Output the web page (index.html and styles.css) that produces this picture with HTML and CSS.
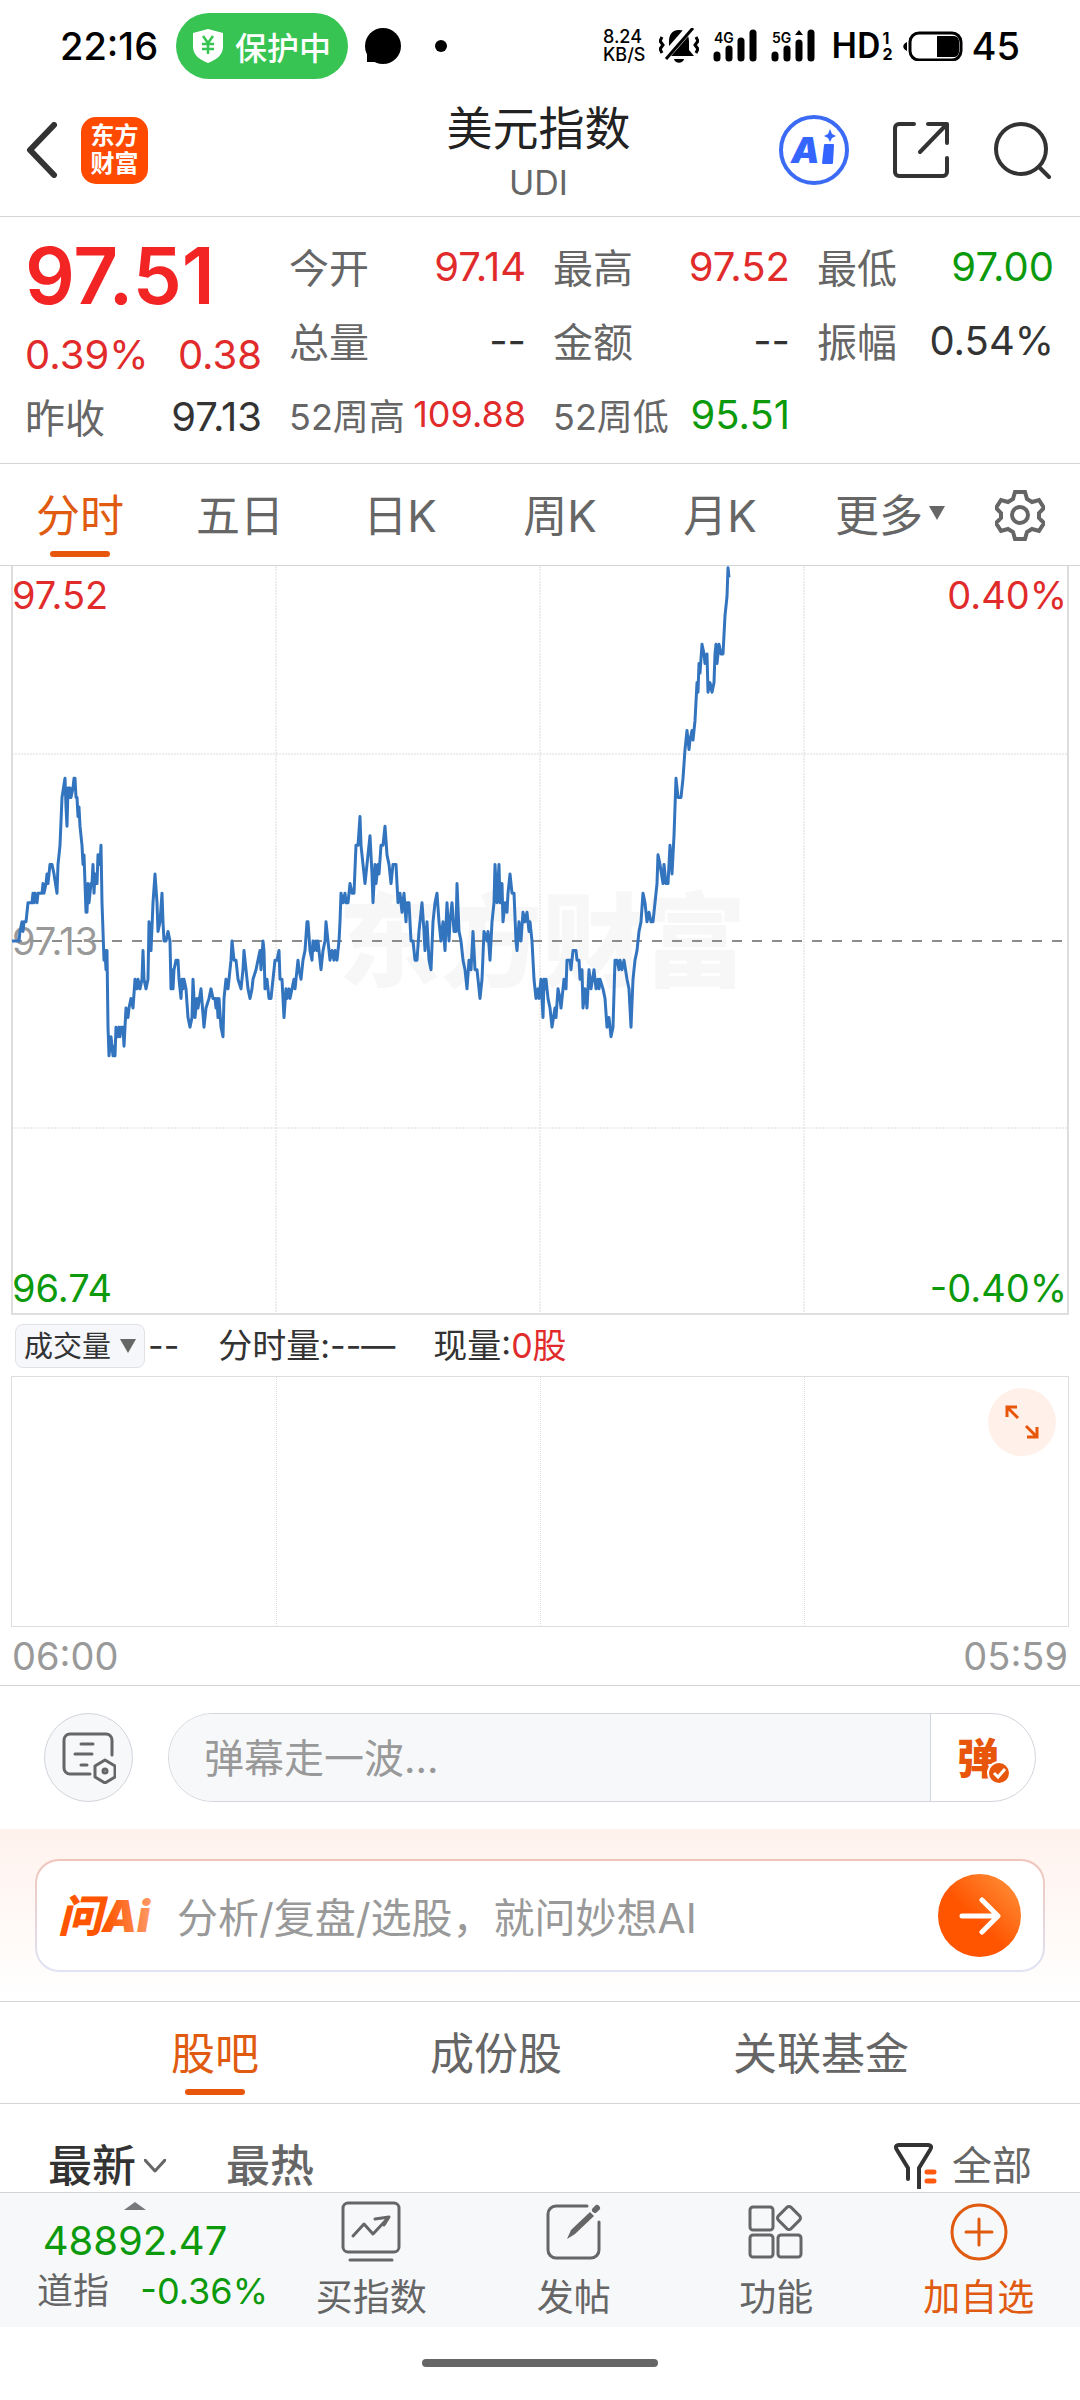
FILE: index.html
```html
<!DOCTYPE html>
<html lang="zh-CN">
<head>
    <meta charset="UTF-8">
    <meta name="viewport" content="width=device-width, initial-scale=1.0">
    <title>美元指数 UDI</title>
    <link rel="stylesheet" href="styles.css">
</head>
<body>
    <div class="status-bar">
        <span class="clock">22:16</span>
        <span class="guard">
            <svg width="30" height="34" viewBox="0 0 30 34">
                <path d="M15 0 30 4v14c0 8-7 13-15 16C7 31 0 26 0 18V4z" fill="#fff"/>
                <path d="M10 7l5 7 5-7M15 14v11M9 15h12M9 20h12" fill="none" stroke="#37c452" stroke-width="2.5"/>
            </svg>
            保护中
        </span>
        <svg class="chat-dot" width="36" height="38" viewBox="0 0 36 38">
            <circle cx="18" cy="19" r="18"/>
            <path d="M2 22v13h14z"/>
        </svg>
        <span class="more-dot"></span>
        <div class="status-right">
            <span class="speed">8.24<br>KB/S</span>
            <svg width="40" height="36" viewBox="0 0 40 36">
                <path d="M20 2c-8 0-10 6-10 12v8l-5 6h30l-5-6v-8c0-6-2-12-10-12z"/>
                <path d="M15 31h10c-1 5-9 5-10 0z"/>
                <path d="M5 30 32-1" stroke="#fff" stroke-width="8"/>
                <path d="M7 31 34 0" stroke="#000" stroke-width="3"/>
                <path d="M3 9l-2 4 3 4-3 4 2 4M37 9l2 4-3 4 3 4-2 4" fill="none" stroke="#000" stroke-width="3"/>
            </svg>
            <svg class="signal" width="44" height="34" viewBox="0 0 44 34">
                <path d="M4 26v3M16 20v9M28 12v17M40 4v25" stroke="#000" stroke-width="7" stroke-linecap="round"/>
                <text x="1" y="14" font-size="14">4G</text>
            </svg>
            <svg class="signal" width="44" height="34" viewBox="0 0 44 34">
                <path d="M4 26v3M16 20v9M28 14v15M40 4v25" stroke="#000" stroke-width="7" stroke-linecap="round"/>
                <path d="M24 6l4-5 4 5z"/>
                <text x="1" y="14" font-size="14">5G</text>
            </svg>
            <span class="hd">HD</span>
            <span class="hd-sim">1<br>2</span>
            <svg class="battery" width="60" height="30" viewBox="0 0 60 30">
                <rect x="7" y="2" width="51" height="27" rx="9" fill="none" stroke="#000" stroke-width="3"/>
                <path d="M34 5h16c4 0 6 2 6 6v9c0 4-2 6-6 6H34zM4 11v9c-5-2-5-7 0-9z"/>
            </svg>
            <span class="clock">45</span>
        </div>
    </div>

    <header class="header">
        <div class="header-side">
            <button class="icon-btn" aria-label="返回">
                <svg width="32" height="56" viewBox="0 0 32 56" class="line dark thick">
                    <path d="M28 3 4 28l24 25"/>
                </svg>
            </button>
            <span class="logo">东方<br>财富</span>
        </div>
        <div class="title">
            <h1>美元指数</h1>
            <p>UDI</p>
        </div>
        <div class="header-side right">
            <button class="icon-btn" aria-label="Ai">
                <svg width="70" height="70" viewBox="0 0 70 70">
                    <circle cx="35" cy="35" r="33" fill="none" stroke="#3b6bf5" stroke-width="4"/>
                    <text x="12" y="48" class="ai-letter">A</text>
                    <path d="M46 30h8l-1 18h-9z" fill="#3565ff" stroke="#3565ff" stroke-width="2" stroke-linejoin="round"/>
                    <path d="M51 14l2 5 4 2-4 2-2 4-2-4-4-2 4-2z" fill="#3565ff"/>
                </svg>
            </button>
            <button class="icon-btn" aria-label="分享">
                <svg width="58" height="58" viewBox="0 0 58 58" class="line dark">
                    <path d="M22 3H7a4 4 0 0 0-4 4v44a4 4 0 0 0 4 4h44a4 4 0 0 0 4-4V37M36 3h19v19M55 3 28 31"/>
                </svg>
            </button>
            <button class="icon-btn" aria-label="搜索">
                <svg width="58" height="58" viewBox="0 0 58 58" class="line dark">
                    <circle cx="28" cy="28" r="25"/>
                    <path d="M46 46l10 10"/>
                </svg>
            </button>
        </div>
    </header>

    <section class="quote">
        <div class="quote-main">
            <strong class="price">97.51</strong>
            <div class="pair up"><span>0.39%</span><span>0.38</span></div>
            <div class="pair"><span class="name">昨收</span><span>97.13</span></div>
        </div>
        <dl class="quote-col">
            <div class="pair"><dt>今开</dt><dd class="up">97.14</dd></div>
            <div class="pair"><dt>总量</dt><dd>--</dd></div>
            <div class="pair small"><dt>52周高</dt><dd class="up">109.88</dd></div>
        </dl>
        <dl class="quote-col">
            <div class="pair"><dt>最高</dt><dd class="up">97.52</dd></div>
            <div class="pair"><dt>金额</dt><dd>--</dd></div>
            <div class="pair week"><dt>52周低</dt><dd class="down">95.51</dd></div>
        </dl>
        <dl class="quote-col">
            <div class="pair"><dt>最低</dt><dd class="down">97.00</dd></div>
            <div class="pair"><dt>振幅</dt><dd>0.54%</dd></div>
        </dl>
    </section>

    <nav class="period-tabs">
        <button class="tab active">分时</button>
        <button class="tab">五日</button>
        <button class="tab">日K</button>
        <button class="tab">周K</button>
        <button class="tab">月K</button>
        <button class="tab more">更多<svg width="16" height="14" viewBox="0 0 16 14"><path d="M0 0h16L8 14z" fill="#666"/></svg></button>
        <button class="icon-btn" aria-label="设置">
            <svg width="50" height="52" viewBox="0 0 50 52" class="line gear">
                <path d="M20 3h10l2 7 5 3 7-2 5 8-5 5v5l5 5-5 8-7-2-5 3-2 7H20l-2-7-5-3-7 2-5-8 5-5v-5l-5-5 5-8 7 2 5-3z"/>
                <circle cx="25" cy="26" r="8"/>
            </svg>
        </button>
    </nav>

    <section class="chart">
        <svg class="plot" viewBox="0 0 1080 750">
            <text x="542" y="413" class="watermark">东方财富</text>
            <path class="grid" d="M276 0v748M540 0v748M804 0v748M12 188h1056M12 562h1056"/>
            <path class="frame" d="M12 0v748h1056V0"/>
            <path class="close-line" d="M12 375h1056"/>
            <text x="12" y="43" class="axis up">97.52</text>
            <text x="1067" y="43" class="axis end up">0.40%</text>
            <text x="12" y="389" class="axis mid">97.13</text>
            <text x="12" y="736" class="axis down">96.74</text>
            <text x="1067" y="736" class="axis end down">-0.40%</text>
            <!-- y is in ticks of 0.01 from the previous close -->
            <g transform="translate(0 375) scale(1 -9.57)">
                <polyline class="price-line" points="12,0 19,0 20,1 22,2 23,1 24,2 26,2 28,4 32,4 33,5 34,4 35,5 37,4 38,5 42,5 43,6 44,5 46,6 47,7 48,6 50,8 52,8 54,7 57,5 58,8 60,10 62,15 65,17 66,14 67,12 68,16 69,15 70,16 71,15 73,16 74,17 75,17 76,15 77,15 78,13 79,14 80,12 82,10 83,8 84,9 86,3 87,3 88,6 89,4 91,6 92,6 93,8 94,5 95,7 97,6 98,9 100,8 101,10 102,4 104,-2 105,-1 106,-3 107,-1 108,-9 109,-12 111,-10 113,-12 114,-11 115,-12 116,-9 118,-10 119,-9 120,-10 121,-9 123,-9 124,-11 125,-9 126,-7 128,-8 129,-7 131,-6 133,-7 135,-4 137,-5 138,-4 140,-5 142,-4 143,-1 144,-4 146,-5 148,-4 149,2 151,-1 153,4 155,7 157,4 158,1 160,2 162,5 163,2 164,0 166,0 168,1 170,0 171,-5 172,-3 173,-5 174,-3 176,-2 178,-2 179,-4 181,-6 182,-4 183,-5 184,-4 186,-5 188,-8 190,-9 192,-8 193,-4 195,-8 197,-6 198,-7 201,-5 204,-9 206,-7 209,-6 211,-5 213,-6 215,-6 216,-7 217,-6 218,-8 219,-6 221,-9 223,-10 224,-6 226,-4 228,-5 229,-4 231,-2 232,0 234,-2 236,-2 238,-4 241,-5 243,-3 244,-1 246,-3 248,-5 250,-6 252,-5 253,-4 256,-3 258,-2 260,-1 261,-3 263,0 264,-1 265,-5 267,-4 269,-6 271,-6 273,-4 275,-2 277,-2 279,-1 280,-4 282,-4 284,-8 286,-5 287,-6 289,-5 290,-6 292,-5 294,-4 295,-5 297,-3 298,-2 299,-3 301,-4 303,-2 305,-1 307,2 308,2 310,-1 312,-2 313,0 314,-1 316,0 317,-1 318,0 320,-2 321,-3 323,-1 325,0 326,2 328,0 330,-2 332,-1 334,-2 335,-1 337,-2 339,0 340,2 341,5 343,4 345,5 346,4 348,4 350,6 352,5 354,5 356,10 358,10 360,13 361,10 363,8 365,6 367,8 370,11 372,7 373,4 375,8 376,6 378,8 379,7 381,10 383,10 385,12 387,9 389,8 391,6 393,8 396,8 398,4 400,5 401,4 402,3 404,5 406,2 407,4 409,4 411,0 413,0 415,-2 417,-2 419,1 422,4 424,1 425,-1 427,2 429,-2 431,-3 433,2 435,4 437,5 439,2 441,0 443,2 445,-1 447,4 449,0 450,2 452,4 454,1 456,1 457,6 459,1 461,0 463,-2 465,-3 467,-5 469,-2 471,-3 473,1 475,-3 477,-3 480,-6 482,-4 484,1 487,0 488,1 490,-2 492,2 494,4 495,8 497,4 499,8 500,4 502,6 503,2 505,4 507,3 508,5 510,7 512,5 514,5 516,0 517,-1 519,2 521,0 523,3 525,2 527,3 529,1 530,2 532,0 534,-4 536,-6 538,-5 539,-6 541,-4 543,-8 544,-4 545,-5 546,-4 548,-6 550,-7 552,-9 555,-7 556,-8 558,-5 560,-6 561,-7 563,-5 564,-4 566,-5 567,-2 570,-2 571,-3 573,-1 576,-1 577,-2 579,-2 580,-4 582,-3 583,-7 585,-5 587,-7 589,-3 591,-5 594,-3 596,-5 598,-4 599,-5 600,-4 603,-5 605,-6 607,-9 609,-8 611,-10 613,-9 615,-2 617,-2 619,-3 620,-2 622,-3 624,-2 627,-4 629,-5 631,-9 633,-4 635,-2 637,-1 639,1 641,2 643,5 645,4 647,2 649,3 651,2 653,2 655,4 657,6 658,9 660,8 663,6 664,8 666,6 668,6 670,10 672,7 674,11 676,17 678,15 681,15 682,16 683,17 685,20 687,22 689,20 690,21 692,22 693,21 695,23 697,27 698,26 699,29 700,28 702,31 704,30 705,29 707,30 708,26 710,27 712,26 714,27 715,30 716,31 717,29 719,31 721,30 723,30 725,34 727,36 728,39 729,38"/>
            </g>
        </svg>

        <div class="volume-bar">
            <label class="indicator">
                <select aria-label="指标">
                    <option>成交量</option>
                </select>
                <svg width="16" height="14" viewBox="0 0 16 14"><path d="M0 0h16L8 14z" fill="#666"/></svg>
            </label>
            <span class="dashes">--</span>
            <span class="minute-vol">分时量:--—</span>
            <span>现量:<span class="up">0股</span></span>
        </div>

        <div class="volume">
            <span></span><span></span><span></span><span></span>
            <button class="expand" aria-label="全屏">
                <svg width="36" height="36" viewBox="0 0 36 36">
                    <path d="M3 13V3h10M3 3l11 11M33 23v10H23M33 33 22 22" fill="none" stroke="#e8560b" stroke-width="3"/>
                </svg>
            </button>
        </div>
        <div class="times"><span>06:00</span><span>05:59</span></div>
    </section>

    <section class="danmu">
        <button class="danmu-set" aria-label="弹幕设置">
            <svg width="54" height="52" viewBox="0 0 54 52" class="line grey">
                <path d="M28 42H8a6 6 0 0 1-6-6V8a6 6 0 0 1 6-6h36a6 6 0 0 1 6 6v15M19 12h12M13 22h17M19 33h6"/>
                <path d="M43 28l10 6v11l-10 6-10-6V34z"/>
                <circle cx="43" cy="39" r="2"/>
            </svg>
        </button>
        <div class="danmu-box">
            <input type="text" placeholder="弹幕走一波..." aria-label="弹幕">
            <button class="danmu-toggle">弹
                <svg class="check" width="24" height="24" viewBox="0 0 24 24">
                    <circle cx="12" cy="12" r="11" fill="#e8560b" stroke="#fff" stroke-width="2"/>
                    <path d="M7 12l4 4 7-8" fill="none" stroke="#fff" stroke-width="3"/>
                </svg>
            </button>
        </div>
    </section>

    <section class="ask">
        <div class="ask-card">
            <svg width="98" height="56" viewBox="0 0 98 56">
                <defs>
                    <linearGradient id="askFill" x1="0" x2="1">
                        <stop offset="0.5" stop-color="#ff5500"/>
                        <stop offset="1" stop-color="#ff9a66"/>
                    </linearGradient>
                </defs>
                <text x="1" y="44" class="ask-logo" fill="url(#askFill)">问Ai</text>
            </svg>
            <input type="text" placeholder="分析/复盘/选股，就问妙想AI" aria-label="问AI">
            <button class="ask-go" aria-label="发送">
                <svg width="42" height="38" viewBox="0 0 42 38">
                    <path d="M3 19h35M23 3l16 16-16 16" fill="none" stroke="#fff" stroke-width="5" stroke-linecap="round" stroke-linejoin="round"/>
                </svg>
            </button>
        </div>
    </section>

    <nav class="section-tabs">
        <button class="tab active">股吧</button>
        <button class="tab">成份股</button>
        <button class="tab">关联基金</button>
    </nav>

    <div class="sort-row">
        <button class="sort active">最新<svg width="22" height="14" viewBox="0 0 22 14" class="line grey"><path d="M1 1l10 11L21 1"/></svg></button>
        <button class="sort">最热</button>
        <button class="filter">
            <svg width="44" height="46" viewBox="0 0 44 46">
                <path d="M14 36V25L3 7C1 4 2 2 5 2h29c3 0 4 2 2 5L25 25v20" fill="none" stroke="#333" stroke-width="4" stroke-linecap="round"/>
                <path d="M33 29h7M33 38h7" stroke="#ff5a10" stroke-width="5" stroke-linecap="round"/>
            </svg>
            全部
        </button>
    </div>

    <footer class="toolbar">
        <div class="market">
            <svg width="22" height="8" viewBox="0 0 22 8"><path d="M0 8 11 0l11 8z" fill="#77777c"/></svg>
            <span class="market-value">48892.47</span>
            <div class="market-row"><span>道指</span><span class="down">-0.36%</span></div>
        </div>
        <button class="tool">
            <svg width="60" height="62" viewBox="0 0 60 62" class="line grey">
                <rect x="2" y="2" width="56" height="49" rx="5"/>
                <path d="M9 59h42M12 35l11-12 9 10 15-16M34 18l14-2-5 8"/>
            </svg>
            买指数
        </button>
        <button class="tool">
            <svg width="60" height="62" viewBox="0 0 60 62" class="line grey">
                <path d="M43 5H12a8 8 0 0 0-8 8v36a8 8 0 0 0 8 8h35a8 8 0 0 0 8-8V21"/>
                <path d="M23 38l4-9 19-18 4 4-19 18z" fill="#666" stroke="none"/>
                <path d="M51 9l2-2" stroke-width="6"/>
            </svg>
            发帖
        </button>
        <button class="tool">
            <svg width="60" height="62" viewBox="0 0 60 62" class="line grey">
                <rect x="4" y="6" width="23" height="23" rx="3"/>
                <rect x="4" y="34" width="23" height="22" rx="3"/>
                <rect x="32" y="34" width="23" height="22" rx="3"/>
                <rect x="34" y="8" width="18" height="18" rx="3" transform="rotate(45 43 17)"/>
            </svg>
            功能
        </button>
        <button class="tool add">
            <svg width="60" height="62" viewBox="0 0 60 62" class="line">
                <circle cx="30" cy="31" r="27"/>
                <path d="M30 18v26M17 31h26"/>
            </svg>
            加自选
        </button>
    </footer>
    <div class="home-bar"></div>
</body>
</html>
```
FILE: styles.css
```css
* {
    box-sizing: border-box;
}

body {
    margin: 0;
    background-color: #fff;
    color: #333;
    font-family: Inter, "Noto Sans CJK SC", sans-serif;
    font-size: 40px;
}

button, input, select {
    font: inherit;
    color: inherit;
    background: none;
    border: none;
    padding: 0;
    margin: 0;
}

svg {
    flex: none;
    display: block;
}

h1, p, dl, dd {
    margin: 0;
}

.up {
    color: #e12b2b;
}

.down {
    color: #0c9a0c;
}

.line {
    fill: none;
    stroke: currentColor;
    stroke-width: 3;
    stroke-linecap: round;
    stroke-linejoin: round;
}

.dark {
    color: #333;
    stroke-width: 4;
}

.thick {
    stroke-width: 6;
}

.grey {
    color: #666;
}

.icon-btn {
    display: flex;
    align-items: center;
    justify-content: center;
}

/* status bar */
.status-bar {
    display: flex;
    align-items: center;
    height: 92px;
    padding: 0 60px;
    color: #000;
}

.clock {
    font-size: 38px;
    font-weight: 500;
}

.guard {
    display: flex;
    align-items: center;
    gap: 12px;
    height: 66px;
    margin-left: 18px;
    padding: 0 17px;
    border-radius: 33px;
    background-color: #37c452;
    color: #fff;
    font-size: 32px;
    font-weight: 500;
}

.chat-dot {
    margin-left: 17px;
}

.more-dot {
    width: 12px;
    height: 12px;
    margin-left: 34px;
    border-radius: 50%;
    background-color: #000;
}

.status-right {
    display: flex;
    align-items: center;
    margin-left: auto;
}

.status-right svg {
    margin-left: 14px;
}

.speed {
    font-size: 18px;
    line-height: 18px;
    font-weight: 500;
}

.signal {
    font-weight: 600;
    overflow: visible;
}

.hd {
    margin-left: 16px;
    font-family: Roboto, sans-serif;
    font-size: 36px;
    font-weight: 500;
}

.hd-sim {
    margin-left: 2px;
    font-size: 16px;
    line-height: 16px;
    font-weight: 700;
}

.status-right .battery {
    margin: 0 9px 0 10px;
}

/* header */
.header {
    display: grid;
    grid-template-columns: 1fr auto 1fr;
    align-items: center;
    height: 125px;
    padding: 0 29px 8px 26px;
    border-bottom: 1px solid #d4d4d4;
}

.header-side {
    display: flex;
    align-items: center;
    gap: 23px;
}

.header-side.right {
    justify-content: flex-end;
    gap: 43px;
}

.logo {
    width: 67px;
    height: 67px;
    padding-top: 5px;
    border-radius: 15px;
    background-color: #ff4a00;
    color: #fff;
    font-size: 24px;
    line-height: 28px;
    font-weight: 700;
    text-align: center;
}

.title {
    padding-top: 6px;
    text-align: center;
}

.title h1 {
    font-size: 46px;
    line-height: 60px;
    font-weight: 400;
    color: #222;
}

.title p {
    font-size: 34px;
    line-height: 50px;
    color: #666;
}

.ai-letter {
    font-size: 36px;
    font-weight: 900;
    font-style: italic;
    fill: #3565ff;
}

/* quote figures */
.quote {
    display: grid;
    grid-template-columns: repeat(4, 1fr);
    gap: 27px;
    height: 247px;
    padding: 12px 26px 0 25px;
    border-bottom: 1px solid #d4d4d4;
}

.pair {
    display: flex;
    align-items: center;
    justify-content: space-between;
    height: 74px;
    white-space: nowrap;
}

.quote-main .pair {
    height: 62px;
}

.price {
    display: block;
    font-size: 78px;
    line-height: 94px;
    font-weight: 600;
    color: #f22424;
}

.quote dt, .name {
    color: #666;
}

.small, .week dt {
    font-size: 36px;
}

/* tabs */
.tab {
    display: flex;
    align-items: center;
    justify-content: center;
    gap: 6px;
    position: relative;
    padding-bottom: 4px;
    font-size: 44px;
    color: #666;
}

.tab.active {
    color: #e05a10;
}

.tab.active::after {
    content: "";
    position: absolute;
    bottom: 8px;
    left: 50%;
    width: 60px;
    height: 6px;
    margin-left: -30px;
    border-radius: 3px;
    background-color: #e8560b;
}

.tab.more {
    padding-left: 20px;
}

.period-tabs {
    display: grid;
    grid-template-columns: repeat(6, 1fr) 120px;
    height: 102px;
    border-bottom: 1px solid #d4d4d4;
}

.gear {
    color: #666;
    stroke-width: 4;
    stroke-linejoin: miter;
}

/* chart */
.plot {
    width: 100%;
}

.watermark {
    font-size: 102px;
    font-weight: 900;
    text-anchor: middle;
    fill: #f7f7f7;
}

.grid {
    fill: none;
    stroke: #dcdcdc;
    stroke-width: 1;
    stroke-dasharray: 2 1;
}

.frame {
    fill: none;
    stroke: #dedede;
    stroke-width: 2;
}

.close-line {
    stroke: #8c8c8c;
    stroke-width: 2;
    stroke-dasharray: 10 10;
}

.axis {
    font-size: 38px;
    fill: currentColor;
}

.axis.mid {
    color: #999;
}

.axis.end {
    text-anchor: end;
}

.price-line {
    fill: none;
    stroke: #3374bf;
    stroke-width: 3;
    stroke-linejoin: round;
    vector-effect: non-scaling-stroke;
}

.volume-bar {
    display: flex;
    align-items: center;
    height: 60px;
    padding-left: 15px;
    font-size: 34px;
    line-height: 44px;
}

.indicator {
    display: flex;
    align-items: center;
    gap: 8px;
    height: 44px;
    padding: 0 8px;
    border: 1px solid #e0e2e6;
    border-radius: 8px;
    background-color: #f6f7fa;
}

.indicator select {
    appearance: none;
    height: 42px;
    font-size: 29px;
}

.dashes {
    margin-left: 3px;
}

.minute-vol {
    margin: 0 38px 0 39px;
}

.volume {
    display: grid;
    grid-template-columns: repeat(4, 1fr);
    position: relative;
    height: 251px;
    margin: 0 11px;
    border: 1px solid #dedede;
}

.volume span + span {
    border-left: 1px dotted #dcdcdc;
}

.expand {
    display: flex;
    align-items: center;
    justify-content: center;
    position: absolute;
    top: 11px;
    right: 12px;
    width: 68px;
    height: 68px;
    border-radius: 50%;
    background-color: #fff1ea;
}

.times {
    display: flex;
    justify-content: space-between;
    height: 59px;
    padding: 0 12px;
    border-bottom: 1px solid #d4d4d4;
    font-size: 38px;
    line-height: 58px;
    color: #999;
}

/* bullet comments */
.danmu {
    display: flex;
    gap: 35px;
    padding: 27px 44px;
}

.danmu-set {
    display: flex;
    align-items: center;
    justify-content: center;
    width: 89px;
    height: 89px;
    border: 1px solid #d2d5dc;
    border-radius: 50%;
    background-color: #f7f8fa;
}

.danmu-box {
    display: flex;
    flex: 1;
    height: 89px;
    border: 1px solid #d2d5dc;
    border-radius: 45px;
    overflow: hidden;
}

.danmu-box input {
    flex: 1;
    min-width: 0;
    padding: 2px 0 0 35px;
    background-color: #f7f8fa;
}

input::placeholder {
    color: #999;
    opacity: 1;
}

.danmu-toggle {
    position: relative;
    width: 105px;
    padding: 0 10px 4px 0;
    border-left: 1px solid #d2d5dc;
    color: #e8560b;
    font-size: 42px;
    font-weight: 900;
}

.check {
    position: absolute;
    right: 24px;
    bottom: 16px;
}

/* ask Ai */
.ask {
    height: 173px;
    padding: 30px 35px;
    border-bottom: 1px solid #d4d4d4;
    background: linear-gradient(#fff2ed, #fff);
}

.ask-card {
    display: flex;
    align-items: center;
    gap: 22px;
    height: 113px;
    padding: 0 22px 0 20px;
    border: 2px solid transparent;
    border-radius: 24px;
    background: linear-gradient(#fff, #fff) padding-box, linear-gradient(#f0c4ba, #dfe4f5) border-box;
}

.ask-card input {
    flex: 1;
    min-width: 0;
    padding-top: 4px;
    font-size: 41px;
}

.ask-logo {
    font-size: 44px;
    font-weight: 900;
    font-style: italic;
}

.ask-go {
    display: flex;
    align-items: center;
    justify-content: center;
    width: 83px;
    height: 83px;
    border-radius: 50%;
    background: linear-gradient(45deg, #ff5500 45%, #ff9640);
}

.section-tabs {
    display: flex;
    justify-content: space-evenly;
    height: 102px;
    border-bottom: 1px solid #d4d4d4;
}

.sort-row {
    display: flex;
    align-items: flex-end;
    height: 88px;
    padding: 0 48px;
    line-height: 52px;
}

.sort {
    display: flex;
    align-items: center;
    gap: 8px;
    margin-right: 60px;
    font-size: 44px;
    font-weight: 500;
    color: #666;
}

.sort.active {
    color: #333;
}

.filter {
    display: flex;
    align-items: center;
    gap: 14px;
    margin-left: auto;
    color: #666;
}

/* bottom toolbar */
.toolbar {
    display: grid;
    grid-template-columns: 270px repeat(4, 1fr);
    height: 135px;
    border-top: 1px solid #d4d4d4;
    background-color: #f7f8fa;
}

.market {
    display: flex;
    flex-direction: column;
    align-items: center;
    padding-top: 9px;
    line-height: 50px;
}

.market-value {
    margin-top: 6px;
    color: #0c9a0c;
}

.market-row {
    display: flex;
    justify-content: space-between;
    align-self: stretch;
    padding: 0 2px 0 37px;
    font-size: 36px;
    color: #666;
}

.market-row .down {
    color: #0c9a0c;
}

.tool {
    display: flex;
    flex-direction: column;
    align-items: center;
    gap: 8px;
    padding-top: 8px;
    font-size: 37px;
    line-height: 54px;
    color: #666;
}

.tool.add {
    color: #e05a10;
}

.home-bar {
    width: 236px;
    height: 8px;
    margin: 32px auto;
    border-radius: 4px;
    background-color: #666;
}
```
